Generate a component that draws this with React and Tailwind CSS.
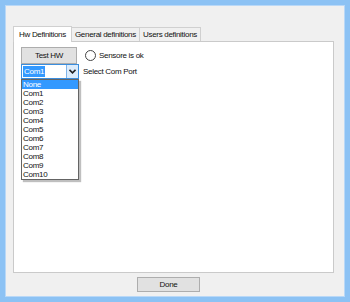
const ports = ['None', 'Com1', 'Com2', 'Com3', 'Com4', 'Com5', 'Com6', 'Com7', 'Com8', 'Com9', 'Com10'];

const tabs = [
  { label: 'Hw Definitions', active: true },
  { label: 'General definitions' },
  { label: 'Users definitions' },
];

export default function App() {
  return (
    <div
      className="w-[350px] h-[302px] bg-[#8cc2f4] p-[5px] text-[8px] tracking-[-0.3px] text-[#111]"
      style={{ fontFamily: '"Liberation Sans", Arial, sans-serif' }}
    >
      <div className="h-full border border-[#b9d8f7] bg-[#f0f0f0] flex flex-col pt-[19px] pl-[7px] pr-[10px]">
        {/* tabs */}
        <div className="flex items-end h-[16px] relative z-10">
          {tabs.map((t) =>
            t.active ? (
              <div
                key={t.label}
                className="h-[16px] px-[5px] bg-white border border-b-0 border-[#d0d0d0] flex items-center -mb-px"
              >
                {t.label}
              </div>
            ) : (
              <div
                key={t.label}
                className="h-[14px] px-[3px] bg-[#f0f0f0] border border-b-0 border-l-0 border-[#d0d0d0] flex items-center"
              >
                {t.label}
              </div>
            )
          )}
        </div>

        {/* tab page */}
        <div className="h-[232px] bg-white border border-[#cacaca] pl-[7px] pt-[5px]">
          <div className="flex items-center">
            <button className="w-[56px] h-[17px] bg-[#e1e1e1] border border-[#adadad] flex items-center justify-center">
              Test HW
            </button>
            <span className="ml-[8px] w-[11px] h-[11px] rounded-full border border-[#444] bg-white"></span>
            <span className="ml-[3px]">Sensore is ok</span>
          </div>

          <div className="flex items-center">
            <div className="w-[58px] h-[15px] border border-[#3b8ede] flex items-stretch bg-white">
              <div className="flex-1 flex items-center pl-px">
                <span className="bg-[#3399ff] text-white leading-[11px] px-px">Com1</span>
              </div>
              <div className="w-[12px] bg-[#dcecfc] border-l border-[#7eb4ea] flex items-center justify-center">
                <svg width="7" height="5" viewBox="0 0 7 5">
                  <path d="M0.5 0.8 L3.5 3.8 L6.5 0.8" fill="none" stroke="#222" strokeWidth="1.6" />
                </svg>
              </div>
            </div>
            <span className="ml-[4px]">Select Com Port</span>
          </div>

          {/* open dropdown list */}
          <div className="w-[58px] border border-[#646464] bg-white shadow-[2px_2px_1px_rgba(0,0,0,0.25)]">
            {ports.map((p, i) => (
              <div
                key={p}
                className={
                  i === 0
                    ? 'h-[9px] leading-[9px] pl-px bg-[#3399ff] text-white'
                    : 'h-[9px] leading-[9px] pl-px'
                }
              >
                {p}
              </div>
            ))}
          </div>
        </div>

        <div className="pt-[4px]">
          <button className="ml-[124px] w-[63px] h-[15px] bg-[#e1e1e1] border border-[#adadad] flex items-center justify-center">
            Done
          </button>
        </div>
      </div>
    </div>
  );
}
